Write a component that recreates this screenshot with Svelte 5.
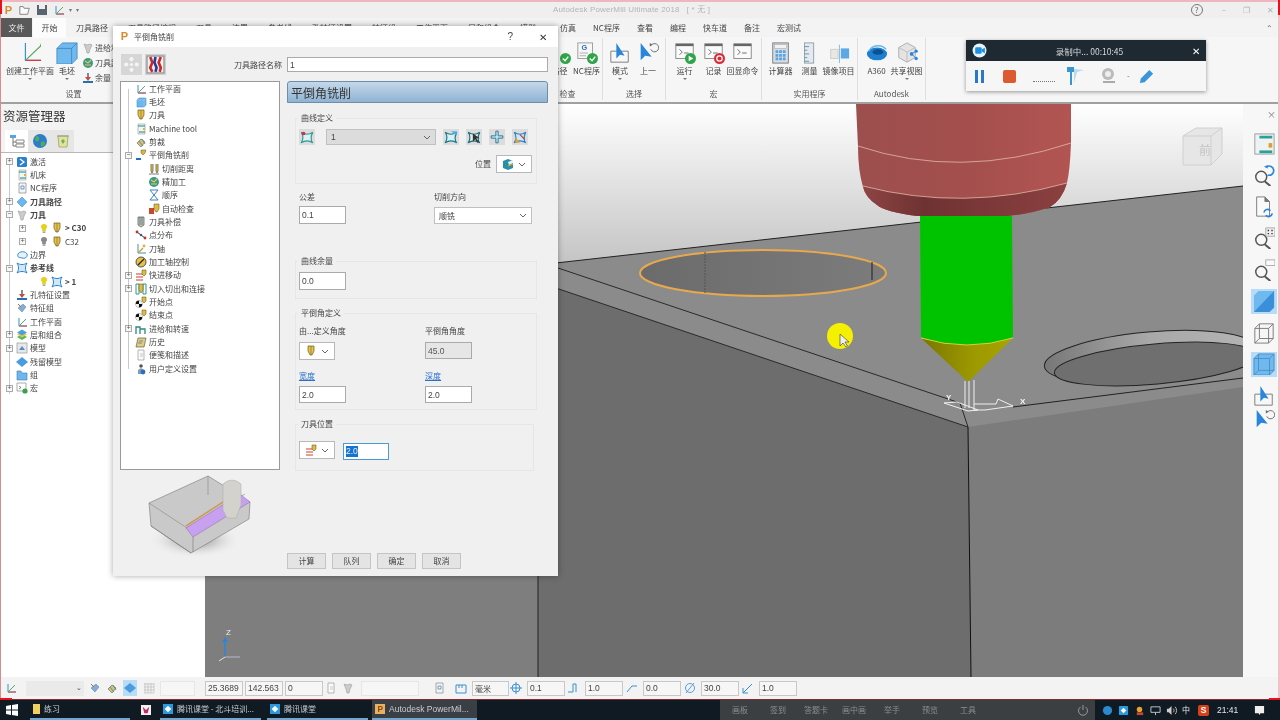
<script>
	const icons = {
		wp: '<path d="M3 2v8h8" fill="none" stroke="#3a8fd0"/><path d="M3 10h8" stroke="#d24a4a"/><path d="M3 10l7-7" stroke="#5aa85a"/>',
		block: '<path d="M2 4l2-2h7v7l-2 2H2z" fill="#6db6ee" stroke="#4a90c8" stroke-width=".6"/><path d="M2 4h7v7M9 4l2-2" fill="none" stroke="#9fd2f5" stroke-width=".6"/>',
		tool: '<path d="M3 1h6v5l-2 4H5L3 6z" fill="#e6c24a" stroke="#6a5a20" stroke-width=".7"/><path d="M6 1v9" stroke="#7a6a20" stroke-width=".6"/>',
		machine: '<path d="M3 1h7v10H3z" fill="#f4f4f4" stroke="#999" stroke-width=".6"/><path d="M3 3h7" stroke="#2aa198" stroke-width="1.2"/><path d="M4 9h6" stroke="#2aa198" stroke-width="1.2"/><path d="M8 5h2v2H8z" fill="#e0b040"/>',
		shear: '<path d="M2 7l4-4 4 3-4 5z" fill="#d9c26a" stroke="#5a7a8a" stroke-width=".7"/><path d="M4 5l4 5M7 3l3 5" stroke="#4a7fa8" stroke-width=".8"/>',
		chamfer: '<path d="M1 9h5v2H1z" fill="#1f6fc0"/><path d="M6 1h5l-1 3-2 2-2-2z" fill="#d6b53e" stroke="#6a5a20" stroke-width=".5"/>',
		cut: '<path d="M3 1v7l1 2 1-2V1M8 1v7l1 2 1-2V1" fill="#f0d050" stroke="#444" stroke-width=".7"/><path d="M1 11h10" stroke="#444" stroke-width=".7"/>',
		finish: '<circle cx="6" cy="6" r="5" fill="#3a9a8a"/><path d="M3 4l3 2 3-3M3 8h6" stroke="#e8c850" stroke-width="1.2" fill="none"/>',
		order: '<path d="M2 1h8L2 11h8z" fill="none" stroke="#3a80c0" stroke-width="1"/>',
		check: '<path d="M1 5h5v6H1z" fill="#c8492f"/><path d="M6 1h5v5l-2 3H8L6 6z" fill="#e0bc40" stroke="#5a4a10" stroke-width=".5"/>',
		thick: '<path d="M3 1h6v8l-3 2-3-2z" fill="#c8c8b0" stroke="#555" stroke-width=".7"/><path d="M5 1v8M7 1v8" stroke="#3a5a8a" stroke-width=".7"/>',
		dist: '<path d="M2 3l8 6" stroke="#333" stroke-width="1"/><circle cx="2" cy="3" r="1.4" fill="#c03030"/><circle cx="6" cy="6" r="1.2" fill="#2a5a9a"/><circle cx="10" cy="9" r="1.4" fill="#c03030"/>',
		axis: '<path d="M3 1v9h8" fill="none" stroke="#3a8fd0"/><path d="M3 10l5-5" stroke="#d8a020" stroke-width="1.4"/><circle cx="9" cy="3" r="1.4" fill="#e0b040"/>',
		ctrl: '<circle cx="6" cy="6" r="5" fill="#e6c24a" stroke="#333" stroke-width=".8"/><path d="M3 9l6-6" stroke="#222" stroke-width="1.3"/>',
		rapid: '<path d="M1 5h7M1 8h7M1 11h7" stroke="#d03a2a" stroke-width="1.2"/><path d="M7 1h4v4l-2 2-2-2z" fill="#e0bc40" stroke="#5a4a10" stroke-width=".5"/>',
		link: '<path d="M1 1h3v10H1zM8 1h3v10H8z" fill="none" stroke="#2a9a8a" stroke-width="1"/><path d="M4 1h4v6l-2 3-2-3z" fill="#e0bc40" stroke="#5a4a10" stroke-width=".5"/>',
		point: '<circle cx="4" cy="8" r="3.4" fill="#111"/><path d="M4 4.6a3.4 3.4 0 0 1 3.4 3.4H4zM4 8v3.4A3.4 3.4 0 0 1 .6 8z" fill="#eee"/><path d="M7 1h4v4l-2 2-2-2z" fill="#e0bc40" stroke="#5a4a10" stroke-width=".5"/>',
		feed: '<path d="M1 11V4h4v7M5 6h5v5" fill="none" stroke="#2a8a80" stroke-width="1.3"/>',
		hist: '<path d="M3 2h8l-2 9H1z" fill="#d8cc90" stroke="#6a6030" stroke-width=".7"/><path d="M4 5h4M3 7h4" stroke="#6a6030" stroke-width=".6"/>',
		note: '<path d="M3 1h6v10H3z" fill="#fafafa" stroke="#999" stroke-width=".7"/><path d="M5 5h3M5 7h3" stroke="#aaa" stroke-width=".6"/>',
		user: '<circle cx="6" cy="3" r="1.8" fill="#555"/><path d="M3 11V7l3-2 3 2v4z" fill="#8a9ab0"/><circle cx="8" cy="9" r="2.4" fill="#2a70c0"/>',
		active: '<rect x="1" y="1" width="10" height="10" rx="1.5" fill="#2a7fd0"/><path d="M4 3l4 3-4 3" fill="none" stroke="#fff" stroke-width="1.3"/>',
		nc: '<path d="M3 1h7v10H3z" fill="#f4f4f4" stroke="#888" stroke-width=".7"/><path d="M5 4h3v3H5z" fill="none" stroke="#3a80c0" stroke-width=".7"/>',
		toolpath: '<path d="M6 1l5 5-5 5-5-5z" fill="#6db6ee" stroke="#4a90c8" stroke-width=".6"/>',
		tools: '<path d="M2 2l3 1 3-1 2 1-2 4-1 4H5L4 7z" fill="#ccc" stroke="#999" stroke-width=".6"/>',
		boundary: '<path d="M2 5c1-3 8-3 9 0s-2 5-5 4-5 0-4-4z" fill="#e6f2fb" stroke="#3a8fd0"/>',
		curve: '<path d="M1 1c3 2 7 2 10 0-2 3-2 7 0 10-3-2-7-2-10 0 2-3 2-7 0-10z" fill="#cfe8f8" stroke="#2a80c8"/>',
		curveAdd: '<path d="M1 2c3 2 7 2 10 0-2 3-2 7 0 9-3-2-7-2-10 0 2-3 2-7 0-9z" fill="#e0f0f0" stroke="#2a9a9a"/><circle cx="3" cy="3" r="1.6" fill="#d0304a"/>',
		curveSel: '<path d="M1 2c3 2 7 2 10 0-2 3-2 7 0 9-3-2-7-2-10 0 2-3 2-7 0-9z" fill="#d8f0f8" stroke="#1a7a8a"/><path d="M6 1h5v4z" fill="#4ab0e8"/>',
		curveCur: '<path d="M1 2c3 2 7 2 10 0-2 3-2 7 0 9-3-2-7-2-10 0 2-3 2-7 0-9z" fill="#e8f0f0" stroke="#1a6a7a"/><path d="M5 3v7l2-2 2 3 1-1-2-3h3z" fill="#333"/>',
		curvePlus: '<path d="M5 1h2v4h4v2H7v4H5V7H1V5h4z" fill="#bfe4f4" stroke="#1a6a8a" stroke-width=".7"/>',
		curveMix: '<path d="M1 2c3 2 7 2 10 0-2 3-2 7 0 9-3-2-7-2-10 0 2-3 2-7 0-9z" fill="#cfe8f8" stroke="#2a80c8"/><path d="M2 6l4 5H2z" fill="#e0a030"/><path d="M6 4l4 4" stroke="#c83a2a"/>',
		position: '<path d="M1 3l5-2 5 2v7l-5 2-5-2z" fill="#2a90a8"/><path d="M6 4l5-2v3L7 7z" fill="#e8f4fc"/><path d="M6 8l5-2" stroke="#e8a030" stroke-width="1.2"/>',
		hole: '<path d="M5 1h2v4H5z" fill="#888"/><path d="M3 5h6L6 9z" fill="#c84a3a"/><path d="M1 9h10v2H1z" fill="#2a70b0"/>',
		feature: '<path d="M2 6l5-4 3 3-4 5z" fill="#7ab0e0" stroke="#777" stroke-width=".5"/><path d="M2 2l3 3" stroke="#c06040"/>',
		layer: '<path d="M1 8l5 3 5-3-5-3z" fill="#58b858"/><path d="M1 5.500l5 3 5-3-5-3z" fill="#e0c850"/><path d="M1 3.500l5 3 5-3-5-3z" fill="#4aa0e0"/>',
		model: '<rect x="1" y="1" width="10" height="10" fill="#e8e8e8" stroke="#999" stroke-width=".7"/><path d="M3 8l3-4 3 4z" fill="#4a90d0"/>',
		stock: '<path d="M6 1l6 5-6 5-6-5z" fill="#4a9ce0"/>',
		group: '<path d="M1 2h4l1 2h5v7H1z" fill="#6db6ee" stroke="#3a80b0" stroke-width=".6"/>',
		macro: '<path d="M1 1h9v8H1z" fill="#fff" stroke="#888" stroke-width=".7"/><path d="M3 4l2 1.500-2 1.500" fill="none" stroke="#555" stroke-width=".7"/><circle cx="9" cy="9" r="2.600" fill="#3aa04a"/>'
	};

	const big = {
		wp: '<path d="M7 2v19h19" fill="none" stroke="#3a8fd0" stroke-width="1.300" transform="translate(0 -1)"/><path d="M7 20h21" stroke="#d83a3a" stroke-width="1.300"/><path d="M7 20L25 3" stroke="#55a860" stroke-width="1.300"/><circle cx="25" cy="3" r="1.500" fill="#2f7a3f"/>',
		block: '<path d="M1 7l6-6h16v17l-6 6H1z" fill="#6fb9ef" stroke="#4a8fc6"/><path d="M1 7h16v17M17 7l6-6" fill="none" stroke="#3a7fb8" stroke-width=".8"/>',
		term: '<rect x="2" y="2" width="19" height="16" fill="#fafafa" stroke="#888"/><rect x="2" y="2" width="19" height="2.500" fill="#666"/><path d="M6 8l3 3-3 3M11 12h5" fill="none" stroke="#666"/>',
		run: '<circle cx="18" cy="18" r="6" fill="#2fa54a"/><path d="M16 15l5 3-5 3z" fill="#fff"/>',
		rec: '<circle cx="18" cy="18" r="6" fill="#d92b36"/><circle cx="18" cy="18" r="3.600" fill="#fff"/><circle cx="18" cy="18" r="2.200" fill="#d92b36"/>',
		ok: '<circle cx="18" cy="18" r="6" fill="#2fa54a"/><path d="M15 18l2.500 2.500L21 16" fill="none" stroke="#fff" stroke-width="1.500"/>',
		page: '<rect x="2" y="1" width="16" height="17" fill="#f7f7f7" stroke="#999"/><text x="6" y="9" font-size="8" font-weight="700" fill="#2a70c0" font-family="Liberation Sans">G</text><path d="M4 12h9M4 15h7" stroke="#aaa"/>',
		mode: '<path d="M2 10h19v12H2z" fill="#f7f7f7" stroke="#777"/><path d="M8 1v17l4-4 5 1z" fill="#2a86dc"/>',
		up: '<path d="M4 1v19l5-5 7 1z" fill="#2a86dc"/><path d="M15 8a4.500 4.500 0 1 0 1-5" fill="none" stroke="#666"/><path d="M14 1l3 2-3 2z" fill="#666"/>',
		calc: '<rect x="3" y="1" width="17" height="22" fill="#d5dde6" stroke="#777"/><rect x="5" y="3" width="13" height="4" fill="#f2f2f2" stroke="#999" stroke-width=".5"/><path d="M6 9h3v3H6zM10 9h3v3h-3zM14 9h3v3h-3zM6 13h3v3H6zM10 13h3v3h-3zM14 13h3v3h-3zM6 17h3v3H6zM10 17h3v3h-3zM14 17h3v3h-3z" fill="#5aa2e0"/>',
		ruler: '<rect x="6" y="1" width="10" height="22" fill="#e6eaee" stroke="#8aa0b0"/><path d="M6 5h5M6 9h3M6 13h5M6 17h3M6 21h5" stroke="#6a8aa0"/>',
		mirror: '<rect x="3" y="8" width="8" height="10" fill="#e8e8e0" stroke="#ccc"/><rect x="14" y="7" width="9" height="11" fill="#5aa8e6"/><path d="M12.500 3v20" stroke="#7ab8e8"/>',
		a360: '<ellipse cx="12" cy="13" rx="11" ry="7" fill="#1d7fd0"/><ellipse cx="13" cy="11" rx="6" ry="3" fill="#0e4f90"/><path d="M3 10c4-7 14-8 19-2" fill="none" stroke="#63b7ef" stroke-width="1.500"/>',
		share: '<path d="M12 1l9 5v11l-9 5-9-5V6z" fill="#e4e4e4" stroke="#aaa"/><path d="M3 6l9 5 9-5M12 11v11" fill="none" stroke="#bbb"/><circle cx="17" cy="13" r="2" fill="#2a86dc"/><circle cx="22" cy="10" r="1.800" fill="#2a86dc"/><circle cx="22" cy="18" r="1.800" fill="#2a86dc"/><path d="M17 13l5-3M17 13l5 5" stroke="#2a86dc"/>',
		machineBig: '<rect x="2" y="1" width="21" height="22" fill="#eef2f2" stroke="#999"/><rect x="7" y="3" width="14" height="3" fill="#2aa198"/><rect x="7" y="19" width="14" height="3" fill="#2aa198"/><rect x="17" y="11" width="4" height="5" fill="#e0a030"/>',
		zoomArc: '<circle cx="9" cy="14" r="6" fill="none" stroke="#555" stroke-width="1.600"/><path d="M13 19l6 5" stroke="#555" stroke-width="2.200"/><path d="M15 3a5 5 0 1 1 1 9" fill="none" stroke="#2a86dc" stroke-width="1.800"/><path d="M12 3l4-2v4z" fill="#2a86dc"/>',
		zoomDots: '<circle cx="9" cy="14" r="6" fill="none" stroke="#555" stroke-width="1.600"/><path d="M13 19l6 5" stroke="#555" stroke-width="2.200"/><rect x="14" y="1" width="10" height="9" fill="#f0f0f0" stroke="#888" stroke-width=".7"/><path d="M16 3h1.500v1.500H16zM20 3h1.500v1.500H20zM16 6.500h1.500V8H16zM20 6.500h1.500V8H20z" fill="#333"/>',
		zoomBox: '<circle cx="9" cy="14" r="6" fill="none" stroke="#555" stroke-width="1.600"/><path d="M13 19l6 5" stroke="#555" stroke-width="2.200"/><rect x="14" y="1" width="10" height="6" fill="#fafafa" stroke="#888" stroke-width=".7"/>',
		doc: '<path d="M4 1h9l5 5v16H4z" fill="#fafafa" stroke="#777"/><path d="M13 1v5h5" fill="#777" stroke="#777"/><path d="M12 18a4 4 0 0 1 7-2M21 19a4 4 0 0 1-7 2" fill="none" stroke="#2a86dc" stroke-width="1.800"/>',
		solid: '<path d="M1 6l5-5h17v18l-5 5H1z" fill="#6fb9ef"/><path d="M1 24L23 1v18l-5 5z" fill="#3a8fd8"/>',
		wire: '<path d="M2 7l5-5h15v16l-5 5H2zM2 7h15v16M17 7l5-5M7 2v16h15M7 18l-5 5" fill="none" stroke="#777"/>',
		shade: '<path d="M1 6l5-5h17v18l-5 5H1z" fill="#6fb9ef" stroke="#4a8fc6"/><path d="M1 6h17v18M18 6l5-5M6 1v18h17M6 19l-5 5" fill="none" stroke="#3a7fb8" stroke-width=".7"/>'
	};

	const mainTree = [
		{ t: '激活', i: 'active', exp: '+' },
		{ t: '机床', i: 'machine' },
		{ t: 'NC程序', i: 'nc' },
		{ t: '刀具路径', i: 'toolpath', exp: '+', bold: true },
		{ t: '刀具', i: 'tools', exp: '-', bold: true },
		{ t: '> C30', i: 'tool', lvl: 1, exp: '+', bulb: '#e6d020', bold: true },
		{ t: 'C32', i: 'tool', lvl: 1, exp: '+', bulb: '#8a8a8a' },
		{ t: '边界', i: 'boundary' },
		{ t: '参考线', i: 'curve', exp: '-', bold: true },
		{ t: '> 1', i: 'curve', lvl: 1, bulb: '#e6d020', bold: true },
		{ t: '孔特征设置', i: 'hole' },
		{ t: '特征组', i: 'feature' },
		{ t: '工作平面', i: 'wp' },
		{ t: '层和组合', i: 'layer', exp: '+' },
		{ t: '模型', i: 'model', exp: '+' },
		{ t: '残留模型', i: 'stock' },
		{ t: '组', i: 'group' },
		{ t: '宏', i: 'macro', exp: '+' }
	];

	const dialogTree = [
		{ t: '工作平面', i: 'wp' },
		{ t: '毛坯', i: 'block' },
		{ t: '刀具', i: 'tool' },
		{ t: 'Machine tool', i: 'machine' },
		{ t: '剪裁', i: 'shear' },
		{ t: '平倒角铣削', i: 'chamfer', exp: '-' },
		{ t: '切削距离', i: 'cut', lvl: 1 },
		{ t: '精加工', i: 'finish', lvl: 1 },
		{ t: '顺序', i: 'order', lvl: 1 },
		{ t: '自动检查', i: 'check', lvl: 1 },
		{ t: '刀具补偿', i: 'thick' },
		{ t: '点分布', i: 'dist' },
		{ t: '刀轴', i: 'axis' },
		{ t: '加工轴控制', i: 'ctrl' },
		{ t: '快进移动', i: 'rapid', exp: '+' },
		{ t: '切入切出和连接', i: 'link', exp: '+' },
		{ t: '开始点', i: 'point' },
		{ t: '结束点', i: 'point' },
		{ t: '进给和转速', i: 'feed', exp: '+' },
		{ t: '历史', i: 'hist' },
		{ t: '便笺和描述', i: 'note' },
		{ t: '用户定义设置', i: 'user' }
	];

	const hiddenTabs = ['刀具路径', '刀具路径编程', '刀具', '边界', '参考线', '孔特征设置', '特征组', '工作平面', '层和组合', '模型'];
	const rightTabs = ['仿真', 'NC程序', '查看', '编程', '快车道', '备注', '宏测试'];

	const sideTools = [
		{ k: 'machineBig' },
		{ k: 'zoomArc' },
		{ k: 'doc' },
		{ k: 'zoomDots' },
		{ k: 'zoomBox' },
		{ k: 'solid', on: true },
		{ k: 'wire' },
		{ k: 'shade', on: true },
		{ k: 'mode' },
		{ k: 'up' }
	];

	const panelTools = ['画板', '签到', '答题卡', '画中画', '举手', '预览', '工具'];
</script>

{#snippet ic(k)}
	<svg class="ic" viewBox="0 0 12 12">{@html icons[k]}</svg>
{/snippet}

{#snippet bg(k, extra)}
	<svg class="bigic" viewBox="0 0 24 24">{@html big[k]}{#if extra}{@html big[extra]}{/if}</svg>
{/snippet}

{#snippet tool(k, label, arrow)}
	<div class="tool">
		{@render bg(k)}
		<span>{label}</span>
		{#if arrow}<i class="drop"></i>{/if}
	</div>
{/snippet}

{#snippet tool2(k, extra, label, arrow)}
	<div class="tool">
		{@render bg(k, extra)}
		<span>{label}</span>
		{#if arrow}<i class="drop"></i>{/if}
	</div>
{/snippet}

{#snippet combo(k)}
	<div class="combo">
		{@render ic(k)}
		<svg class="chev" viewBox="0 0 8 5"><path d="M1 1l3 3 3-3" fill="none" stroke="#666" /></svg>
	</div>
{/snippet}

{#snippet treeRows(rows)}
	{#each rows as r}
		<div class="row" class:lvl1={r.lvl === 1} class:bold={r.bold}>
			<span class="exp" class:show={r.exp}>{r.exp === '+' ? '+' : r.exp === '-' ? '−' : ''}</span>
			{#if r.bulb}
				<svg class="bulb" viewBox="0 0 8 12"><path d="M4 1a3 3 0 0 1 2 5.500V9H2V6.500A3 3 0 0 1 4 1z" fill={r.bulb} /><path d="M2.500 10h3" stroke="#666" /></svg>
			{/if}
			{@render ic(r.i)}
			<span class="lbl">{r.t}</span>
		</div>
	{/each}
{/snippet}

<div class="screen">
	<div class="window">
		<header class="titlebar">
			<div class="qat">
				<b class="logo">P</b>
				<svg viewBox="0 0 14 12"><path d="M1 2h4l1 2h6l-2 7H1z" fill="#fafafa" stroke="#777" /></svg>
				<svg viewBox="0 0 12 12"><path d="M1 1h10v10H1z" fill="#5a6470" /><path d="M3 1h6v4H3z" fill="#eee" /></svg>
				{@render ic('wp')}
				<small>▾</small>
				<small>▾</small>
			</div>
			<span class="apptitle">Autodesk PowerMill Ultimate 2018 &nbsp; [ * 无 ]</span>
			<div class="winctl">
				<span class="help">?</span>
				<span>–</span>
				<span>❐</span>
				<span>✕</span>
			</div>
		</header>

		<nav class="tabs">
			<span class="tab file">文件</span>
			<span class="tab on">开始</span>
			<div class="tabs-hidden">
				{#each hiddenTabs as t}<span>{t}</span>{/each}
			</div>
			<div class="tabs-right">
				{#each rightTabs as t}<span>{t}</span>{/each}
			</div>
			<small class="collapse">⌃</small>
		</nav>

		<section class="ribbon">
			<div class="group g-setup">
				<div class="tools">
					<div class="tool wide">
						{@render bg('wp')}
						<span>创建工作平面</span>
						<i class="drop"></i>
					</div>
					{@render tool('block', '毛坯', true)}
					<div class="mini">
						<div>{@render ic('tools')}<span>进给和</span></div>
						<div>{@render ic('finish')}<span>刀具路径</span></div>
						<div>{@render ic('hole')}<span>余量</span></div>
					</div>
				</div>
				<p>设置</p>
			</div>
			<div class="group g-hidden"></div>
			<div class="group g-check">
				<div class="tools">
					<div class="tool narrow">
						{@render bg('ok')}
						<span>路径</span>
					</div>
					{@render tool2('page', 'ok', 'NC程序')}
				</div>
				<p>检查</p>
			</div>
			<div class="group g-select">
				<div class="tools">
					{@render tool('mode', '模式', true)}
					{@render tool('up', '上一')}
				</div>
				<p>选择</p>
			</div>
			<div class="group g-macro">
				<div class="tools">
					{@render tool2('term', 'run', '运行', true)}
					{@render tool2('term', 'rec', '记录')}
					{@render tool('term', '回显命令')}
				</div>
				<p>宏</p>
			</div>
			<div class="group g-util">
				<div class="tools">
					{@render tool('calc', '计算器')}
					{@render tool('ruler', '测量')}
					{@render tool('mirror', '镜像项目')}
				</div>
				<p>实用程序</p>
			</div>
			<div class="group g-auto">
				<div class="tools">
					{@render tool('a360', 'A360')}
					{@render tool('share', '共享视图', true)}
				</div>
				<p>Autodesk</p>
			</div>
		</section>

		<main class="main">
			<aside class="explorer">
				<h2>资源管理器</h2>
				<div class="extabs">
					<span class="extab on">
						<svg viewBox="0 0 16 16"><path d="M1 2h6v3H1z" fill="#5aa2e0" /><path d="M4 5v8h3M4 9h3" fill="none" stroke="#777" /><path d="M7 7h8v3H7zM7 11h8v3H7z" fill="#fff" stroke="#888" /></svg>
					</span>
					<span class="extab">
						<svg viewBox="0 0 16 16"><circle cx="8" cy="8" r="7" fill="#2a7fc8" /><path d="M4 3c3 0 4 2 3 4S3 9 3 6zM9 9c3-1 5 0 4 2s-3 3-4 2 0-3 0-4z" fill="#5aa860" /></svg>
					</span>
					<span class="extab">
						<svg viewBox="0 0 16 16"><path d="M3 3h10l-1 11H4z" fill="#dfe3a0" stroke="#b0b070" /><path d="M2 3h12" stroke="#999" /><path d="M6 8l2-2 2 2-2 3z" fill="#7ab050" /></svg>
					</span>
				</div>
				<div class="tree main-tree">
					{@render treeRows(mainTree)}
				</div>
			</aside>

			<svg class="viewport" viewBox="205 104 1038 573">
				<defs>
					<linearGradient id="sky" x1="0" x2="0" y1="0" y2="1">
						<stop offset="0" stop-color="#ffffff" />
						<stop offset="1" stop-color="#c4c4c4" />
					</linearGradient>
					<linearGradient id="holder" x1="0" x2="1" y1="0" y2="0">
						<stop offset="0" stop-color="#9c4f4e" />
						<stop offset=".5" stop-color="#a34f4d" />
						<stop offset="1" stop-color="#b25552" />
					</linearGradient>
					<linearGradient id="collar" x1="0" x2="1" y1="0" y2="0">
						<stop offset="0" stop-color="#8e4444" />
						<stop offset=".3" stop-color="#6f3232" />
						<stop offset="1" stop-color="#8c4040" />
					</linearGradient>
					<linearGradient id="cone" x1="0" x2="1" y1="0" y2="0">
						<stop offset="0" stop-color="#7a7600" />
						<stop offset=".55" stop-color="#9c9800" />
						<stop offset="1" stop-color="#a8a400" />
					</linearGradient>
					<linearGradient id="hole" x1="0" x2="1" y1="0" y2="0">
						<stop offset="0" stop-color="#6b6b6b" />
						<stop offset="1" stop-color="#7c7c7c" />
					</linearGradient>
					<linearGradient id="ring" x1="0" x2="1" y1="0" y2="0">
						<stop offset="0" stop-color="#777" />
						<stop offset=".5" stop-color="#a8a8a8" />
						<stop offset="1" stop-color="#b4b4b4" />
					</linearGradient>
				</defs>
				<rect x="205" y="104" width="1038" height="160" fill="url(#sky)" />
				<path d="M205 265H538L1243 186V677H205z" fill="#8b8b8b" />
				<path d="M205 282L538 282V677H205z" fill="#7e7e7e" />
				<path d="M538 282L968 427L971 677H538z" fill="#6d6d6d" />
				<path d="M968 427L1243 387V677H971z" fill="#7c7c7c" />
				<path d="M538 265L1243 186" stroke="#222" stroke-width="1" />
				<path d="M558 268L960 403" stroke="#2a2a2a" stroke-width="1" />
				<path d="M538 282L968 427" stroke="#2a2a2a" stroke-width="1" />
				<path d="M960 403L968 427" stroke="#2a2a2a" stroke-width="1" />
				<path d="M1013 407L1243 378" stroke="#222" stroke-width="1" />
				<path d="M968 427L971 677" stroke="#111" stroke-width="1" />
				<path d="M538 282V677" stroke="#222" stroke-width="1" />

				<ellipse cx="763" cy="273" rx="123" ry="23" fill="url(#hole)" stroke="#e8a94e" stroke-width="2" />
				<path d="M705 252V294" stroke="#555" stroke-dasharray="2 1" />
				<path d="M872 262V280" stroke="#222" />

				<ellipse cx="1150" cy="357" rx="106" ry="25" fill="url(#ring)" stroke="#222" transform="rotate(-5 1150 357)" />
				<ellipse cx="1156" cy="364" rx="102" ry="20" fill="#6f6f6f" stroke="#222" transform="rotate(-5 1156 364)" />

				<path d="M856 104H1071V143Q1070 170 1067 183Q1062 200 1050 207Q1030 214 1007 216H917Q885 212 877 205Q865 197 863 187Q858 170 858 147z" fill="url(#holder)" />
				<path d="M863 186Q963 212 1067 183Q1062 200 1050 207Q1030 214 1007 216H917Q885 212 877 205Q865 197 863 186z" fill="url(#collar)" />
				<path d="M858 146Q960 180 1071 143" fill="none" stroke="#e4b8a8" stroke-width=".8" />
				<path d="M863 186Q963 212 1067 183" fill="none" stroke="#e4b8a8" stroke-width=".8" />
				<path d="M920 216H1012L1013 337Q967 356 921 337z" fill="#00c300" />
				<path d="M921 338Q967 352 1013 338L968 382z" fill="url(#cone)" />
				<path d="M921 338Q967 352 1013 338" fill="none" stroke="#d4d430" />

				<g class="axes" fill="none" stroke="#f0f0f0" stroke-width="1">
					<path d="M965 381V408M969 381V408M974 380V410" />
					<path d="M974 404H996L998 399L1013 406L985 410L974 410" />
					<path d="M944 403L968 411L978 410L957 402z" />
				</g>
				<text class="axlabel" x="946" y="400">Y</text>
				<text class="axlabel" x="1020" y="404">X</text>

				<circle cx="840" cy="336" r="13" fill="#f5f000" />
				<path d="M840 334V346L843 343L846 347L847.500 346L845 342H849z" fill="#eee" stroke="#333" stroke-width=".6" />

				<g class="cube">
					<path d="M1183 136L1196 128H1222V154L1211 165H1183z" fill="#e6e6e6" stroke="#d0d0d0" />
					<path d="M1183 136H1211V165M1211 136L1222 128" fill="none" stroke="#cfcfcf" />
					<text x="1199" y="155" fill="#c4c4c4" font-size="12">前</text>
				</g>

				<g class="triad">
					<path d="M225 657V640" stroke="#2a86dc" stroke-width="1.500" />
					<path d="M225 657H240" stroke="#b8b8d0" stroke-width="1" />
					<path d="M225 657L219 661" stroke="#d8e8e8" stroke-width="1" />
					<path d="M222 642L225 637L228 642z" fill="#2a86dc" />
					<text x="226" y="635" fill="#f0f0f0" font-size="8" font-family="Liberation Sans">Z</text>
				</g>
			</svg>

			<aside class="sidebar">
				<small class="closex">×</small>
				{#each sideTools as s}
					<span class="sidetool" class:on={s.on}>
						<svg viewBox="0 0 24 24">{@html big[s.k]}</svg>
					</span>
				{/each}
			</aside>
		</main>

		<footer class="status">
			{@render ic('wp')}
			<div class="box dd"><small>⌄</small></div>
			{@render ic('feature')}
			{@render ic('shear')}
			<span class="hl">{@render ic('stock')}</span>
			<svg class="ic grid" viewBox="0 0 12 12"><path d="M1 2h10M1 5h10M1 8h10M1 11h10M2 1v10M5 1v10M8 1v10M11 1v10" stroke="#bbb" stroke-width=".7" /></svg>
			<div class="box empty1"></div>
			<div class="box num coord">25.3689</div>
			<div class="box num coord">142.563</div>
			<div class="box num coord">0</div>
			{@render ic('note')}
			{@render ic('tools')}
			<div class="box empty2"></div>
			{@render ic('nc')}
			<svg class="ic ruler" viewBox="0 0 12 12"><path d="M1 3h10v8H1z" fill="none" stroke="#3a8fd0" /><path d="M4 3v3M7 3v3" stroke="#3a8fd0" /></svg>
			<div class="box num cn">毫米</div>
			<svg class="ic" viewBox="0 0 12 12"><circle cx="6" cy="6" r="4" fill="none" stroke="#3a8fd0" /><path d="M6 0v12M0 6h12" stroke="#3a8fd0" /></svg>
			<div class="box num">0.1</div>
			<svg class="ic" viewBox="0 0 12 12"><path d="M0 10h5V2h3v8" fill="none" stroke="#3a8fd0" /></svg>
			<div class="box num">1.0</div>
			<svg class="ic" viewBox="0 0 12 12"><path d="M1 10l5-6h5" fill="none" stroke="#3a8fd0" /></svg>
			<div class="box num">0.0</div>
			<svg class="ic" viewBox="0 0 12 12"><circle cx="6" cy="6" r="4.500" fill="none" stroke="#5a9fd8" /><path d="M2 11l8-10" stroke="#5a9fd8" /></svg>
			<div class="box num">30.0</div>
			<svg class="ic" viewBox="0 0 12 12"><path d="M1 11l9-9M1 11h5M1 11V6" fill="none" stroke="#3a8fd0" /></svg>
			<div class="box num">1.0</div>
		</footer>
	</div>

	<div class="taskbar">
		<svg class="win" viewBox="0 0 12 12"><path d="M0 2l5-1v4.500H0zM6 1l6-1v5.500H6zM0 6.500h5V11l-5-1zM6 6.500h6V12l-6-1z" fill="#fff" /></svg>
		<div class="task t1">
			<svg viewBox="0 0 7 10"><rect width="7" height="10" fill="#f0d060" /></svg>
			<span>练习</span>
		</div>
		<div class="task t2">
			<svg viewBox="0 0 12 12"><rect width="12" height="12" fill="#f4f0f0" /><path d="M2 2l4 4 4-4-2 8H4z" fill="#c02a6a" /></svg>
		</div>
		<div class="task t3">
			<svg viewBox="0 0 12 12"><rect width="12" height="12" fill="#2a9ae0" /><path d="M6 2l4 4-4 4-4-4z" fill="#fff" /></svg>
			<span>腾讯课堂 - 北斗培训...</span>
		</div>
		<div class="task t4">
			<svg viewBox="0 0 12 12"><rect width="12" height="12" fill="#2a9ae0" /><path d="M6 2l4 4-4 4-4-4z" fill="#fff" /></svg>
			<span>腾讯课堂</span>
		</div>
		<div class="task t5">
			<svg viewBox="0 0 12 12"><rect width="12" height="12" fill="#e8b060" /><text x="3" y="10" font-size="10" font-weight="700" fill="#8a4a10" font-family="Liberation Sans">P</text></svg>
			<span>Autodesk PowerMil...</span>
		</div>
		<div class="livebar">
			{#each panelTools as p}<span>{p}</span>{/each}
			<svg class="power" viewBox="0 0 12 12"><path d="M3.500 3a4.500 4.500 0 1 0 5 0M6 1v5" fill="none" stroke="#999" /></svg>
		</div>
		<div class="tray">
			<svg viewBox="0 0 12 12"><circle cx="6" cy="6" r="5" fill="#2a8ad0" /></svg>
			<svg viewBox="0 0 12 12"><rect x="1" y="1" width="10" height="10" rx="1" fill="#2a9ae0" /><path d="M6 3l3 3-3 3-3-3z" fill="#fff" /></svg>
			<svg viewBox="0 0 12 12"><circle cx="6" cy="5" r="3" fill="#e8a030" /><path d="M3 8h7v3H3z" fill="#c04a2a" /></svg>
			<svg viewBox="0 0 12 12"><path d="M1 2h10v6H1zM6 8v3" fill="none" stroke="#ccc" /></svg>
			<svg viewBox="0 0 12 12"><path d="M1 4h2l3-3v10L3 8H1z" fill="#ccc" /><path d="M8 4c1 1 1 3 0 4M10 2c2 2 2 6 0 8" fill="none" stroke="#ccc" /></svg>
			<em>中</em>
			<b class="sogou">S</b>
			<em class="clock">21:41</em>
			<svg viewBox="0 0 12 12"><path d="M1 1h10v8H7l-1 2-1-2H1z" fill="#eee" /></svg>
		</div>
	</div>

	<div class="dialog">
		<div class="dlg-title">
			<b class="logo">P</b>
			<span>平倒角铣削</span>
			<i class="q">?</i>
			<i class="x">✕</i>
		</div>
		<div class="dlg-top">
			<span class="sq dim">
				<svg viewBox="0 0 18 18"><g fill="#f4f4f4"><circle cx="9" cy="4" r="2" /><circle cx="4" cy="9" r="2" /><circle cx="14" cy="9" r="2" /><circle cx="9" cy="14" r="2" /><circle cx="9" cy="9" r="1.500" /></g></svg>
			</span>
			<span class="sq">
				<svg viewBox="0 0 18 18"><rect x="1" y="1" width="16" height="16" fill="#f0f0f0" stroke="#888" /><path d="M4 2l2 5-2 5 2 4" fill="none" stroke="#c82a2a" stroke-width="2.500" /><path d="M9 2l-1 5 2 5-1 4" fill="none" stroke="#2a3a9a" stroke-width="2.500" /><path d="M14 2l-2 5 2 5-1 4" fill="none" stroke="#c82a2a" stroke-width="2.500" /></svg>
			</span>
			<label for="tpname">刀具路径名称</label>
			<input id="tpname" class="name" value="1" />
		</div>
		<div class="dlg-body">
			<div class="dlg-left">
				<div class="tree dlg-tree">
					{@render treeRows(dialogTree)}
				</div>
				<svg class="preview" viewBox="145 475 110 85">
					<defs>
						<radialGradient id="shadow">
							<stop offset="0" stop-color="#777" />
							<stop offset="1" stop-color="#eee" stop-opacity="0" />
						</radialGradient>
					</defs>
					<ellipse cx="195" cy="540" rx="46" ry="18" fill="url(#shadow)" />
					<path d="M149 503L208 476L250 502L249 519L191 553L151 526z" fill="#c9c9c9" stroke="#777" stroke-width=".6" />
					<path d="M149 503L187 528L245 494M208 476V495" fill="none" stroke="#888" stroke-width=".6" />
					<path d="M186 528L240 494L250 502L193 537z" fill="#c8a0f0" stroke="#7a5aa0" stroke-width=".4" />
					<path d="M186 526L240 491" stroke="#d09a50" stroke-width="1.500" />
					<path d="M193 537V552M151 526L191 553" stroke="#777" stroke-width=".6" fill="none" />
					<path d="M223 484Q232 476 241 484V505L236 518H227L223 510z" fill="#d4d2cc" stroke="#aaa" stroke-width=".5" />
				</svg>
			</div>
			<div class="dlg-right">
				<h3 class="pagehead">平倒角铣削</h3>
				<div class="form">
					<fieldset class="fs-curve">
						<legend>曲线定义</legend>
						<div class="curve-row">
							<span class="imgbtn first">{@render ic('curveAdd')}</span>
							<div class="select disabled"><span>1</span><svg class="chev" viewBox="0 0 8 5"><path d="M1 1l3 3 3-3" fill="none" stroke="#666" /></svg></div>
							<span class="imgbtn">{@render ic('curveSel')}</span>
							<span class="imgbtn">{@render ic('curveCur')}</span>
							<span class="imgbtn">{@render ic('curvePlus')}</span>
							<span class="imgbtn">{@render ic('curveMix')}</span>
						</div>
						<div class="pos-row">
							<span>位置</span>
							<div class="combo wide">
								{@render ic('position')}
								<svg class="chev" viewBox="0 0 8 5"><path d="M1 1l3 3 3-3" fill="none" stroke="#666" /></svg>
							</div>
						</div>
					</fieldset>

					<div class="tol">
						<div>
							<span class="cap">公差</span>
							<input class="field" value="0.1" />
						</div>
						<div>
							<span class="cap">切削方向</span>
							<div class="select long"><span>顺铣</span><svg class="chev" viewBox="0 0 8 5"><path d="M1 1l3 3 3-3" fill="none" stroke="#666" /></svg></div>
						</div>
					</div>

					<fieldset class="fs-thick">
						<legend>曲线余量</legend>
						<input class="field" value="0.0" />
					</fieldset>

					<fieldset class="fs-def">
						<legend>平倒角定义</legend>
						<div class="def-grid">
							<div>
								<span class="cap">由...定义角度</span>
								<div class="cmb-wrap">{@render combo('tool')}</div>
							</div>
							<div>
								<span class="cap">平倒角角度</span>
								<div class="cmb-wrap"><input class="field ro" value="45.0" readonly /></div>
							</div>
							<div class="rowb">
								<span class="cap link">宽度</span>
								<input class="field" value="2.0" />
							</div>
							<div class="rowb">
								<span class="cap link">深度</span>
								<input class="field" value="2.0" />
							</div>
						</div>
					</fieldset>

					<fieldset class="fs-pos">
						<legend>刀具位置</legend>
						<div class="pos-line">
							{@render combo('rapid')}
							<div class="focus"><mark>2.0</mark></div>
						</div>
					</fieldset>
				</div>
				<div class="buttons">
					<button>计算</button>
					<button>队列</button>
					<button>确定</button>
					<button>取消</button>
				</div>
			</div>
		</div>
	</div>

	<div class="recorder">
		<div class="rec-head">
			<svg viewBox="0 0 14 14"><circle cx="7" cy="7" r="6.500" fill="#e8f4fc" /><rect x="3" y="4" width="6" height="6" rx="1" fill="#1f8fe0" /><path d="M9 6l3-1.500v5L9 8z" fill="#1f8fe0" /></svg>
			<span>录制中... 00:10:45</span>
			<i>✕</i>
		</div>
		<div class="rec-body">
			<span class="pause"></span>
			<span class="stop"></span>
			<span class="dots"></span>
			<svg class="mic" viewBox="0 0 20 20"><path d="M2 1h7v5H7v13H5V6H2z" fill="#3a96d0" /><path d="M9 3l10 1-7 2-3 11z" fill="#bcd8ec" /></svg>
			<svg class="cam" viewBox="0 0 18 18"><circle cx="8" cy="7" r="6" fill="#bbb" /><circle cx="8" cy="7" r="3" fill="#eee" /><path d="M3 15h12" stroke="#aaa" stroke-width="2" /></svg>
			<em>-</em>
			<svg class="pen" viewBox="0 0 18 18"><path d="M2 16l1-5L12 2l4 4-9 9z" fill="#3a96d8" /></svg>
		</div>
	</div>

	<i class="corner c-tl"></i>
	<i class="corner c-tr"></i>
	<i class="corner c-bl"></i>
	<i class="corner c-br"></i>
</div>

<style>
	:global(body) {
		margin: 0;
		overflow: hidden;
	}

	.screen {
		position: relative;
		width: 1280px;
		height: 720px;
		overflow: hidden;
		background: #10191f;
		font-family: 'Noto Sans CJK SC', 'Liberation Sans', sans-serif;
		font-size: 8px;
		line-height: 12px;
		color: #444;
		filter: blur(0.3px);
	}

	svg {
		display: block;
		flex: none;
	}

	.corner {
		position: absolute;
		background: #e8101c;
	}

	.c-tl {
		left: 0;
		top: 0;
		width: 2px;
		height: 14px;
	}

	.c-tr {
		right: 0;
		top: 0;
		width: 2px;
		height: 15px;
	}

	.c-bl {
		left: 0;
		top: 698px;
		width: 12px;
		height: 2px;
	}

	.c-br {
		right: 0;
		top: 698px;
		width: 11px;
		height: 2px;
	}

	.window {
		box-sizing: border-box;
		height: 700px;
		display: flex;
		flex-direction: column;
		border-top: 2px solid #efb6bf;
		border-left: 1px solid #d98a92;
		border-right: 2px solid #efc2c8;
		border-bottom: 1px solid #8c2a30;
		background: #f3f3f3;
	}

	.ic {
		width: 12px;
		height: 12px;
	}

	.logo {
		display: inline-block;
		width: 11px;
		height: 13px;
		font: 700 11px/13px 'Liberation Sans', sans-serif;
		color: #d98a2a;
		text-align: center;
	}

	/* title bar */
	.titlebar {
		height: 16px;
		flex: none;
		display: flex;
		align-items: center;
		position: relative;
		background: #efefef;
	}

	.qat {
		display: flex;
		align-items: center;
		gap: 4px;
		width: 552px;
		padding-left: 2px;
		box-sizing: border-box;
	}

	.qat svg {
		width: 12px;
		height: 12px;
		margin-left: 1px;
	}

	.qat small {
		font-size: 6px;
		color: #777;
	}

	.apptitle {
		color: #b4b4b4;
		font-size: 8px;
		font-family: 'Liberation Sans', 'Noto Sans CJK SC', sans-serif;
		letter-spacing: 0.15px;
	}

	.winctl {
		margin-left: auto;
		display: flex;
		align-items: center;
		gap: 17px;
		padding-right: 4px;
		color: #b0b0b0;
		font-size: 8px;
	}

	.help {
		width: 10px;
		height: 10px;
		border: 1px solid #777;
		border-radius: 50%;
		text-align: center;
		line-height: 10px;
		color: #666;
		margin-right: 2px;
	}

	/* tabs */
	.tabs {
		height: 19px;
		flex: none;
		display: flex;
		align-items: center;
		position: relative;
		background: #f3f3f3;
	}

	.tab {
		height: 19px;
		line-height: 19px;
		text-align: center;
		width: 32px;
	}

	.tab.file {
		background: #595959;
		color: #eee;
		width: 31px;
	}

	.tab.on {
		background: #fcfcfc;
		margin-left: 1px;
		width: 33px;
		height: 20px;
	}

	.tabs-hidden {
		display: flex;
		gap: 20px;
		width: 494px;
		padding-left: 10px;
		box-sizing: border-box;
		overflow: hidden;
		white-space: nowrap;
		flex: none;
	}

	.tabs-right {
		display: flex;
		gap: 17px;
		white-space: nowrap;
	}

	.collapse {
		margin-left: auto;
		margin-right: 5px;
		font-size: 8px;
		color: #666;
	}

	/* ribbon */
	.ribbon {
		height: 67px;
		flex: none;
		box-sizing: border-box;
		display: flex;
		background: #f6f6f6;
		border-bottom: 2px solid #a0a0a0;
	}

	.group {
		box-sizing: border-box;
		display: flex;
		flex-direction: column;
		align-items: center;
		border-right: 1px solid #dedede;
		height: 62px;
		margin-top: 1px;
	}

	.group p {
		margin: auto 0 0;
		text-align: center;
		height: 12px;
		color: #555;
	}

	.tools {
		display: flex;
		padding-top: 4px;
	}

	.tool {
		width: 29px;
		display: flex;
		flex-direction: column;
		align-items: center;
		white-space: nowrap;
	}

	.tool span {
		margin-top: 1px;
	}

	.tool.wide {
		width: 52px;
	}

	.tool.narrow {
		width: 22px;
		overflow: hidden;
	}

	.bigic {
		width: 22px;
		height: 22px;
	}

	.drop {
		width: 0;
		height: 0;
		margin-top: 1px;
		border: 2px solid transparent;
		border-top-color: #777;
		border-bottom: 0;
	}

	.g-setup {
		width: 145px;
		border-right: 0;
	}

	.g-setup .tools {
		width: 145px;
		box-sizing: border-box;
		padding-left: 3px;
	}

	.g-setup .tool:nth-child(2) {
		width: 22px;
	}

	.mini {
		margin-left: 4px;
		display: flex;
		flex-direction: column;
		gap: 3px;
	}

	.mini div {
		display: flex;
		align-items: center;
		gap: 1px;
		white-space: nowrap;
	}

	.g-hidden {
		width: 387px;
	}

	.g-check {
		width: 70px;
	}

	.g-check .tools {
		padding-left: 16px;
	}

	.g-check .tool:last-child {
		width: 32px;
	}

	.g-select {
		width: 63px;
	}

	.g-select .tool {
		width: 28px;
	}

	.g-macro,
	.g-util {
		width: 96px;
	}

	.g-auto {
		width: 68px;
	}

	.g-auto .tool {
		width: 30px;
	}

	/* main area */
	.main {
		flex: 1;
		display: flex;
		min-height: 0;
	}

	.explorer {
		width: 204px;
		flex: none;
		display: flex;
		flex-direction: column;
		background: #f3f3f3;
	}

	.explorer h2 {
		margin: 0;
		height: 24px;
		padding-left: 2px;
		font-size: 12.5px;
		font-weight: 400;
		line-height: 23px;
		color: #333;
	}

	.extabs {
		height: 24px;
		display: flex;
		align-items: flex-end;
		padding-left: 4px;
		border-bottom: 1px solid #b8b8b8;
	}

	.extab {
		width: 23px;
		height: 22px;
		display: flex;
		align-items: center;
		justify-content: center;
		background: #e6e6e6;
	}

	.extab.on {
		background: #fff;
	}

	.extab svg {
		width: 16px;
		height: 16px;
	}

	.tree {
		background: #fff;
	}

	.main-tree {
		flex: 1;
		padding-top: 2px;
		background: #fff linear-gradient(#c8c8c8, #c8c8c8) 8px 9px / 1px 232px no-repeat;
	}

	.row {
		height: 13.33px;
		display: flex;
		align-items: center;
		padding-left: 5px;
		white-space: nowrap;
		color: #444;
	}

	.row.bold .lbl {
		font-weight: 700;
	}

	.exp {
		width: 7px;
		height: 7px;
		margin-right: 3px;
		flex: none;
		font: 7px/6px 'Liberation Mono', monospace;
		text-align: center;
		color: #555;
	}

	.exp.show {
		box-sizing: border-box;
		border: 1px solid #aaa;
		background: #f7f7f7;
		line-height: 5px;
	}

	.lbl {
		margin-left: 2px;
	}

	.row.lvl1 {
		padding-left: 18px;
	}

	.bulb {
		width: 8px;
		height: 11px;
		margin-left: 11px;
		margin-right: 3px;
	}

	.viewport {
		width: 1038px;
		height: 573px;
		flex: none;
		background: #eee;
	}

	.axlabel {
		font: 700 8px 'Liberation Sans', sans-serif;
		fill: #f4f4f4;
	}

	.cube text {
		font-family: 'Noto Sans CJK SC', sans-serif;
	}

	.sidebar {
		flex: 1;
		display: flex;
		flex-direction: column;
		align-items: center;
		background: #f7f7f7;
		padding: 5px 0 0 6px;
		min-width: 0;
	}

	.closex {
		align-self: flex-end;
		margin-right: 2px;
		height: 22px;
		font-size: 9px;
		color: #777;
	}

	.sidetool {
		width: 26px;
		height: 25px;
		margin-bottom: 6.5px;
		flex: none;
		display: flex;
		align-items: center;
		justify-content: center;
	}

	.sidetool:last-child {
		margin-top: -7px;
	}

	.sidetool svg {
		width: 22px;
		height: 22px;
	}

	.sidetool.on {
		background: #b9dcf6;
	}

	/* status bar */
	.status {
		height: 22px;
		flex: none;
		display: flex;
		align-items: center;
		padding-left: 4px;
		background: #f3f3f3;
		font-family: 'Liberation Sans', 'Noto Sans CJK SC', sans-serif;
		font-size: 8.5px;
	}

	.box {
		box-sizing: border-box;
		height: 15px;
		line-height: 13px;
		border: 1px solid #c8c8c8;
		padding-left: 2px;
		background: #f6f6f6;
		color: #444;
		flex: none;
	}

	.dd {
		width: 58px;
		margin: 0 5px 0 4px;
		border: 0;
		background: #eaeaea;
		text-align: right;
		padding-right: 2px;
	}

	.status > .ic {
		margin-right: 5px;
		flex: none;
	}

	.hl {
		background: #b9dcf6;
		height: 16px;
		display: flex;
		align-items: center;
		padding: 0 1px;
	}

	.grid {
		margin-left: 6px;
	}

	.empty1 {
		width: 35px;
		border-color: #e6e6e6;
		margin: 0 10px 0 0;
	}

	.num {
		width: 38px;
		margin-right: 3px;
	}

	.num.coord {
		margin-right: 2px;
	}

	.empty2 {
		width: 58px;
		margin: 0 14px 0 2px;
		border-color: #e6e6e6;
	}

	.ruler {
		margin-left: 5px;
	}

	.num.cn {
		width: 37px;
		margin-right: 1px;
		font-family: 'Noto Sans CJK SC', sans-serif;
		font-size: 8px;
	}

	/* taskbar */
	.taskbar {
		height: 20px;
		display: flex;
		align-items: center;
		color: #c8cdd2;
		background: #0f1a22;
	}

	.win {
		width: 12px;
		height: 12px;
		margin-left: 6px;
	}

	.task {
		height: 20px;
		display: flex;
		align-items: center;
		gap: 4px;
		box-sizing: border-box;
		border-bottom: 2px solid #6fa8d0;
		white-space: nowrap;
		flex: none;
	}

	.task svg {
		width: 10px;
		height: 10px;
	}

	.t1 {
		width: 100px;
		margin-left: 12px;
		padding-left: 3px;
	}

	.t1 svg {
		width: 7px;
	}

	.t2 {
		width: 20px;
		margin-left: 6px;
		border-bottom: 0;
		padding-left: 5px;
	}

	.t3 {
		width: 101px;
		margin-left: 4px;
		padding-left: 3px;
	}

	.t4 {
		width: 101px;
		margin-left: 6px;
		padding-left: 3px;
	}

	.t5 {
		width: 105px;
		margin-left: 4px;
		padding-left: 3px;
		background: #3a3f45;
		font-family: 'Liberation Sans', 'Noto Sans CJK SC', sans-serif;
		font-size: 8.5px;
	}

	.livebar {
		margin-left: 243px;
		width: 375px;
		height: 20px;
		box-sizing: border-box;
		display: flex;
		align-items: center;
		padding-left: 1px;
		background: #3b3f42;
		color: #8a8e90;
		flex: none;
	}

	.livebar span {
		width: 38px;
		text-align: center;
	}

	.power {
		width: 12px;
		height: 12px;
		margin-left: auto;
		margin-right: 6px;
	}

	.tray {
		display: flex;
		align-items: center;
		gap: 5px;
		padding-left: 7px;
	}

	.tray svg {
		width: 11px;
		height: 11px;
	}

	.tray em {
		font-style: normal;
		color: #e6e6e6;
	}

	.sogou {
		width: 11px;
		height: 11px;
		margin-left: 3px;
		border-radius: 2px;
		background: #d8401c;
		color: #fff;
		font: 700 9px/11px 'Liberation Sans', sans-serif;
		text-align: center;
	}

	.clock {
		margin: 0 11px 0 3px;
		font-family: 'Liberation Sans', sans-serif;
		font-size: 8.5px;
	}

	/* dialog */
	.dialog {
		position: absolute;
		left: 113px;
		top: 26px;
		width: 445px;
		height: 550px;
		box-sizing: border-box;
		background: #f0f0f0;
		box-shadow: 0 0 6px rgba(0, 0, 0, 0.35);
	}

	.dlg-title {
		height: 21px;
		display: flex;
		align-items: center;
		gap: 4px;
		padding-left: 6px;
		background: #fff;
		color: #444;
	}

	.dlg-title .q {
		margin-left: auto;
		font-style: normal;
		font-size: 10px;
		font-family: 'Liberation Sans', sans-serif;
	}

	.dlg-title .x {
		margin: 0 11px 0 22px;
		font-style: normal;
		font-size: 10px;
		color: #333;
	}

	.dlg-top {
		height: 21px;
		margin-top: 7px;
		padding: 0 10px 0 8px;
		display: flex;
		align-items: center;
		gap: 3px;
	}

	.sq {
		width: 21px;
		height: 21px;
		box-sizing: border-box;
		padding: 1px;
		background: #cfcfcf;
	}

	.sq.dim {
		background: #d6d6d6;
	}

	.sq svg {
		width: 19px;
		height: 19px;
	}

	.dlg-top label {
		margin-left: auto;
		margin-right: 2px;
	}

	.name {
		width: 261px;
		height: 15px;
		box-sizing: border-box;
		border: 1px solid #aaa;
		padding: 0 2px;
		font: 8.5px 'Liberation Sans', sans-serif;
		color: #444;
		background: #fff;
	}

	.dlg-body {
		display: flex;
		gap: 7px;
		margin-top: 6px;
		padding-left: 7px;
	}

	.dlg-left {
		width: 160px;
	}

	.dlg-tree {
		height: 389px;
		box-sizing: border-box;
		border: 1px solid #9a9a9a;
		background: #fff linear-gradient(#c8c8c8, #c8c8c8) 7px 7px / 1px 280px no-repeat;
	}

	.dlg-tree .row {
		padding-left: 4px;
	}

	.dlg-tree .row .exp {
		margin-right: 3px;
	}

	.dlg-tree .row.lvl1 {
		padding-left: 17px;
	}

	.preview {
		width: 110px;
		height: 85px;
		margin: 5px 0 0 25px;
	}

	.dlg-right {
		width: 261px;
	}

	.pagehead {
		margin: 0;
		height: 22px;
		box-sizing: border-box;
		padding-left: 3px;
		border: 1px solid #6f8ca8;
		border-radius: 3px 3px 0 0;
		background: linear-gradient(#c4d8ea, #8fb3d2);
		font-size: 12px;
		font-weight: 400;
		line-height: 21px;
		color: #333;
	}

	.form {
		padding-left: 8px;
		width: 242px;
	}

	fieldset {
		margin: 0;
		padding: 0 3px;
		box-sizing: border-box;
		border: 1px solid #e6e6e6;
		min-width: 0;
	}

	legend {
		padding: 0 3px;
		margin-left: -1px;
		height: 12px;
		line-height: 12px;
	}

	.fs-curve {
		margin-top: 9px;
		padding: 5px 3px 10px;
	}

	.curve-row {
		display: flex;
		align-items: center;
		gap: 7px;
	}

	.imgbtn {
		width: 16px;
		height: 16px;
		display: flex;
		align-items: center;
		justify-content: center;
		background: #dcdcdc;
		flex: none;
	}

	.imgbtn .ic {
		width: 14px;
		height: 14px;
	}

	.imgbtn.first {
		margin-right: 4px;
	}

	.select {
		box-sizing: border-box;
		height: 16px;
		display: flex;
		align-items: center;
		justify-content: space-between;
		padding: 0 4px;
		border: 1px solid #c0c0c0;
		background: #fff;
		color: #444;
	}

	.select.disabled {
		width: 110px;
		background: #dcdcdc;
		font: 8.5px 'Liberation Sans', sans-serif;
	}

	.select.long {
		width: 98px;
		height: 17px;
		margin-top: 4px;
	}

	.chev {
		width: 8px;
		height: 5px;
	}

	.pos-row {
		display: flex;
		align-items: center;
		justify-content: flex-end;
		gap: 5px;
		margin: 10px 1px 0 0;
	}

	.combo {
		box-sizing: border-box;
		width: 36px;
		height: 18px;
		display: flex;
		align-items: center;
		justify-content: space-between;
		padding: 0 5px 0 5px;
		border: 1px solid #b8b8b8;
		background: #fff;
	}

	.tol {
		display: grid;
		grid-template-columns: 135px 1fr;
		margin-top: 7px;
		padding-left: 4px;
	}

	.cap {
		display: block;
		height: 12px;
	}

	.field {
		display: block;
		box-sizing: border-box;
		width: 47px;
		height: 18px;
		margin-top: 3px;
		padding: 0 2px;
		border: 1px solid #aaa;
		background: #fff;
		font: 8.5px 'Liberation Sans', sans-serif;
		color: #444;
	}

	.fs-thick {
		margin-top: 31px;
		height: 44px;
		padding-top: 5px;
	}

	.fs-thick .field {
		margin-top: 0;
	}

	.fs-def {
		margin-top: 8px;
		padding: 6px 3px 6px;
	}

	.def-grid {
		display: grid;
		grid-template-columns: 126px 1fr;
	}

	.cmb-wrap {
		margin-top: 5px;
	}

	.cmb-wrap .field {
		margin-top: 0;
	}

	.ro {
		background: #e6e6e6;
		color: #555;
		height: 17px;
	}

	.rowb {
		margin-top: 10px;
	}

	.rowb .field {
		margin-top: 4px;
		height: 17px;
	}

	.link {
		color: #2a70c8;
		text-decoration: underline;
	}

	.fs-pos {
		margin-top: 8px;
		width: 239px;
		padding: 11px 3px 10px;
	}

	.pos-line {
		display: flex;
		align-items: flex-start;
		gap: 8px;
	}

	.focus {
		box-sizing: border-box;
		width: 46px;
		height: 17px;
		margin-top: 2px;
		padding: 2px;
		border: 1px solid #4a9ad4;
		background: #fff;
		font: 8.5px/11px 'Liberation Sans', sans-serif;
	}

	mark {
		background: #1673d0;
		color: #dfefff;
		display: inline-block;
	}

	.buttons {
		display: flex;
		gap: 6px;
		margin-top: 82px;
	}

	button {
		width: 39px;
		height: 16px;
		padding: 0;
		border: 1px solid #c4c4c4;
		background: #e4e4e4;
		font: 8px/14px 'Noto Sans CJK SC', sans-serif;
		color: #444;
	}

	/* screen recorder */
	.recorder {
		position: absolute;
		left: 966px;
		top: 40px;
		width: 240px;
		height: 51px;
		background: #f6f6f6;
		box-shadow: 0 1px 4px rgba(0, 0, 0, 0.4);
	}

	.rec-head {
		height: 21px;
		display: flex;
		align-items: center;
		padding: 0 6px;
		background: #1e2932;
		color: #d4d8dc;
		font-size: 8.5px;
	}

	.rec-head svg {
		width: 15px;
		height: 15px;
	}

	.rec-head span {
		flex: 1;
		text-align: center;
	}

	.rec-head i {
		font-style: normal;
		font-size: 10px;
		color: #fff;
	}

	.rec-body {
		height: 30px;
		display: flex;
		align-items: center;
		padding-left: 9px;
	}

	.pause {
		box-sizing: border-box;
		width: 9px;
		height: 13px;
		border-left: 3px solid #2a78c8;
		border-right: 3px solid #2a78c8;
	}

	.stop {
		width: 13px;
		height: 13px;
		margin-left: 19px;
		border-radius: 2px;
		background: #dc5a32;
	}

	.dots {
		width: 22px;
		margin-left: 17px;
		border-top: 1px dotted #777;
		margin-top: 10px;
	}

	.mic {
		width: 20px;
		height: 20px;
		margin-left: 10px;
	}

	.cam {
		width: 18px;
		height: 18px;
		margin-left: 15px;
	}

	.rec-body em {
		margin-left: 9px;
		font-style: normal;
		color: #777;
	}

	.pen {
		width: 17px;
		height: 17px;
		margin-left: 8px;
	}
</style>
